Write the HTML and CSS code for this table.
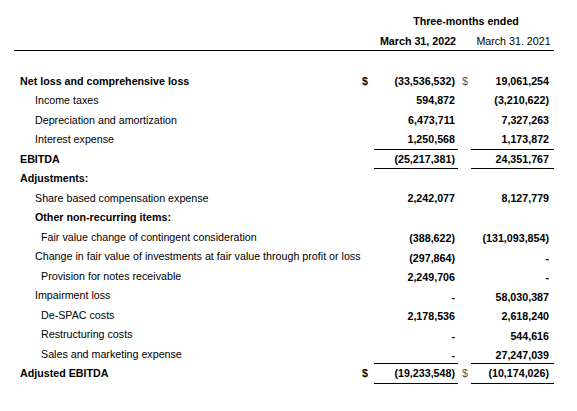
FILE: index.html
```html
<!DOCTYPE html>
<html>
<head>
<meta charset="utf-8">
<link rel="stylesheet" href="styles.css">
</head>
<body>
<table class="fin">
  <colgroup>
    <col class="c-label"><col class="c-cur1"><col class="c-num1"><col class="c-cur2"><col class="c-num2">
  </colgroup>
  <thead>
    <tr class="h1"><th></th><th></th><th colspan="3" class="period">Three-months ended</th></tr>
    <tr class="h2"><th></th><th></th><th class="d1">March 31, 2022</th><th></th><th class="d2">March 31. 2021</th></tr>
  </thead>
  <tbody>
    <tr class="spacer"><td colspan="5"></td></tr>
    <tr><td class="lbl b">Net loss and comprehensive loss</td><td class="cur">$</td><td class="num">(33,536,532)</td><td class="cur cur2">$</td><td class="num n2">19,061,254</td></tr>
    <tr><td class="lbl i1">Income taxes</td><td></td><td class="num">594,872</td><td></td><td class="num n2">(3,210,622)</td></tr>
    <tr><td class="lbl i1">Depreciation and amortization</td><td></td><td class="num">6,473,711</td><td></td><td class="num n2">7,327,263</td></tr>
    <tr class="ul"><td class="lbl i1">Interest expense</td><td></td><td class="num">1,250,568</td><td></td><td class="num n2">1,173,872</td></tr>
    <tr class="ul"><td class="lbl b">EBITDA</td><td></td><td class="num">(25,217,381)</td><td></td><td class="num n2">24,351,767</td></tr>
    <tr><td class="lbl b">Adjustments:</td><td></td><td></td><td></td><td></td></tr>
    <tr><td class="lbl i1">Share based compensation expense</td><td></td><td class="num">2,242,077</td><td></td><td class="num n2">8,127,779</td></tr>
    <tr><td class="lbl i1 b">Other non-recurring items:</td><td></td><td></td><td></td><td></td></tr>
    <tr class="lo"><td class="lbl i2">Fair value change of contingent consideration</td><td></td><td class="num">(388,622)</td><td></td><td class="num n2">(131,093,854)</td></tr>
    <tr class="lo"><td class="lbl i1">Change in fair value of investments at fair value through profit or loss</td><td></td><td class="num">(297,864)</td><td></td><td class="num n2">-</td></tr>
    <tr class="lo"><td class="lbl i2">Provision for notes receivable</td><td></td><td class="num">2,249,706</td><td></td><td class="num n2">-</td></tr>
    <tr class="lo"><td class="lbl i1">Impairment loss</td><td></td><td class="num">-</td><td></td><td class="num n2">58,030,387</td></tr>
    <tr class="lo"><td class="lbl i2">De-SPAC costs</td><td></td><td class="num">2,178,536</td><td></td><td class="num n2">2,618,240</td></tr>
    <tr class="lo"><td class="lbl i2">Restructuring costs</td><td></td><td class="num">-</td><td></td><td class="num n2">544,616</td></tr>
    <tr class="lo ul"><td class="lbl i2">Sales and marketing expense</td><td></td><td class="num">-</td><td></td><td class="num n2">27,247,039</td></tr>
    <tr class="ul"><td class="lbl b">Adjusted EBITDA</td><td class="cur">$</td><td class="num">(19,233,548)</td><td class="cur cur2">$</td><td class="num n2">(10,174,026)</td></tr>
  </tbody>
</table>
</body>
</html>
```

FILE: styles.css
```css
html, body {
  margin: 0;
  padding: 0;
  background: #fff;
}
body {
  font-family: "Liberation Sans", Arial, sans-serif;
  font-size: 10.7px;
  color: #000;
}
.fin {
  margin: 11px 0 0 14px;
  border-collapse: collapse;
  table-layout: fixed;
  width: 540px;
}
.c-label { width: 348px; }
.c-cur1 { width: 12px; }
.c-num1 { width: 84px; }
.c-cur2 { width: 13px; }
.c-num2 { width: 83px; }
.fin th, .fin td {
  padding: 0;
  white-space: nowrap;
  overflow: visible;
}
.fin .h1 th { height: 20px; }
.fin .h2 th { height: 19px; border-bottom: 1px solid #000; }
.fin .period { font-weight: bold; text-align: center; padding-left: 4px; }
.fin .d1 { font-weight: bold; text-align: center; padding-left: 4px; }
.fin .d2 { font-weight: normal; text-align: center; padding-left: 2px; }
.fin .spacer td { height: 20px; }
.fin tbody tr { height: 19.5px; }
.fin .lbl { padding-left: 6px; font-weight: normal; }
.fin .lbl.b { font-weight: bold; }
.fin .lbl.i1 { padding-left: 21px; }
.fin .lbl.i2 { padding-left: 27px; }
.fin .cur { font-weight: bold; padding-left: 0; }
.fin .cur2 { font-weight: normal; color: #555; padding-left: 4px; }
.fin .num {
  font-weight: bold;
  text-align: right;
  padding-right: 3px;
}
.fin .num.n2 { padding-right: 5px; }
.fin .ul .num { border-bottom: 1px solid #000; }
.fin .lo .num { padding-top: 3px; }
```
